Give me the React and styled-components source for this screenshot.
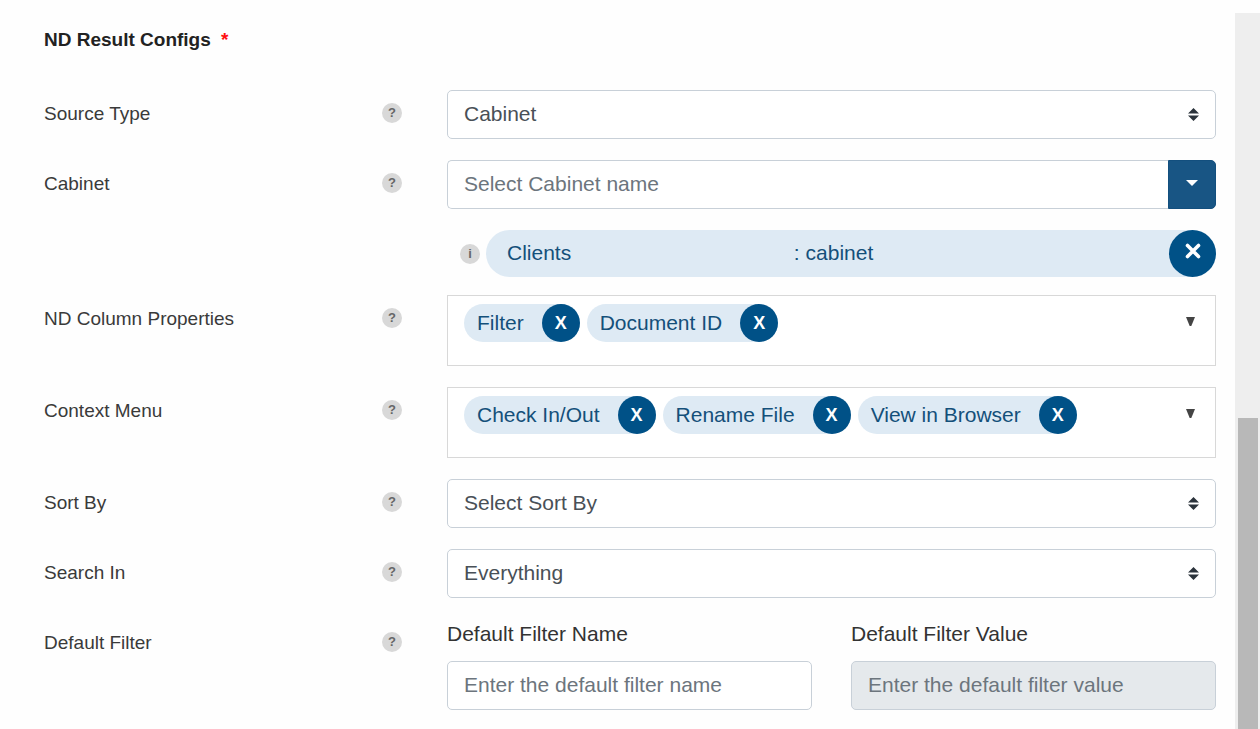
import React from "react";
import styled, { createGlobalStyle, css } from "styled-components";

const GlobalStyle = createGlobalStyle`
  *, *::before, *::after { box-sizing: border-box; }
  body {
    margin: 0;
    background: #fefefe;
    color: #333;
    font-family: "Liberation Sans", Arial, sans-serif;
  }
  button, input, select { font-family: inherit; margin: 0; }
`;

const Page = styled.div`
  display: flex;
  min-height: 100vh;
`;

const Form = styled.form`
  flex: 1;
  min-width: 0;
  padding: 28px 19px 0 44px;
`;

const Heading = styled.h2`
  margin: 0 0 38px;
  font-size: 19px;
  line-height: 24px;
  color: #222;
`;

const Required = styled.span`
  margin-left: 5px;
  color: #ff1010;
`;

const Row = styled.div`
  display: grid;
  grid-template-columns: 338px 20px minmax(0, 1fr);
  margin-bottom: ${(p) => (p.$tight ? 18 : 21)}px;
  &:last-child { margin-bottom: 0; }
`;

const labelText = css`
  font-size: 19px;
  line-height: 48px;
  color: #3a3a3a;
`;

const RowLabel = styled.label`
  ${labelText}
`;

const RowTitle = styled.span`
  ${labelText}
`;

const Control = styled.div`
  margin-left: 45px;
  min-width: 0;
`;

const Hint = styled.button`
  width: 20px;
  height: 20px;
  padding: 0;
  flex: none;
  border: 0;
  border-radius: 50%;
  background: #d8d8d8;
  color: #666;
  font-size: 13px;
  font-weight: 700;
  line-height: 20px;
  text-align: center;
`;

const HintCell = styled.div`
  display: flex;
  align-items: center;
  height: 46px;
`;

const field = css`
  display: block;
  width: 100%;
  height: 49px;
  padding: 0 16px 2px;
  border: 1px solid #c8d0d8;
  border-radius: 5px;
  background: #fff;
  font-size: 21px;
`;

const SelectWrap = styled.div`
  position: relative;
`;

const Select = styled.select`
  ${field}
  appearance: none;
  color: #495057;
`;

const SortArrows = styled.svg`
  position: absolute;
  top: 18px;
  right: 17px;
  pointer-events: none;
`;

const TextInput = styled.input`
  ${field}
  &::placeholder { color: #6c757d; opacity: 1; }
  &:disabled { background: #e5e9ec; }
`;

const Combo = styled.div`
  display: flex;
`;

const ComboInput = styled(TextInput)`
  flex: 1;
  min-width: 0;
  border-right: 0;
  border-radius: 5px 0 0 5px;
`;

const ComboButton = styled.button`
  display: flex;
  align-items: center;
  justify-content: center;
  width: 48px;
  padding: 0 0 4px;
  border: 1px solid #134f7e;
  border-radius: 0 5px 5px 0;
  background: #185584;
`;

const Selection = styled.div`
  display: flex;
  align-items: center;
  gap: 6px;
  margin-top: 21px;
  padding-left: 13px;
`;

const Pill = styled.div`
  display: grid;
  grid-template-columns: 13fr 17fr 47px;
  flex: 1;
  height: 47px;
  padding-left: 21px;
  border-radius: 24px;
  background: #deeaf4;
  color: #14507a;
  font-size: 21px;
  line-height: 45px;
`;

const PillRemove = styled.button`
  display: flex;
  align-items: center;
  justify-content: center;
  height: 47px;
  padding: 0 0 6px;
  border: 0;
  border-radius: 50%;
  background: #005187;
`;

const TagBox = styled.div`
  display: flex;
  align-items: flex-start;
  gap: 7px;
  min-height: 71px;
  padding: 8px 20px 8px 16px;
  border: 1px solid #d8d8d8;
  background: #fff;
`;

const Tag = styled.span`
  display: flex;
  gap: 18px;
  padding-left: 13px;
  border-radius: 20px;
  background: #deeaf4;
  color: #14507a;
  font-size: 21px;
  line-height: 37px;
  white-space: nowrap;
`;

const TagRemove = styled.button`
  width: 38px;
  height: 38px;
  padding: 0;
  border: 0;
  border-radius: 50%;
  background: #005187;
  color: #fff;
  font-size: 18px;
  font-weight: 700;
  line-height: 38px;
`;

const TagToggle = styled.button`
  display: flex;
  align-items: center;
  height: 34px;
  margin-left: auto;
  padding: 0;
  border: 0;
  background: none;
`;

const FilterFields = styled.div`
  display: grid;
  grid-template-columns: 1fr 1fr;
  gap: 39px;
`;

const FieldLabel = styled.label`
  display: block;
  margin-bottom: 12px;
  font-size: 21px;
  line-height: 30px;
  color: #333;
`;

const ScrollTrack = styled.div`
  display: flex;
  flex-direction: column;
  width: 25px;
  margin-top: 13px;
  padding: 0 2px 0 3px;
  background: #eee;
`;

const ScrollSpace = styled.div`
  flex: 405;
`;

const ScrollThumb = styled.div`
  flex: 311;
  background: #b8b8b8;
`;

function Help({ topic }) {
  return (
    <HintCell>
      <Hint type="button" aria-label={`Help: ${topic}`}>?</Hint>
    </HintCell>
  );
}

function SelectRow({ id, label, value }) {
  return (
    <Row>
      <RowLabel htmlFor={id}>{label}</RowLabel>
      <Help topic={label} />
      <Control>
        <SelectWrap>
          <Select id={id} defaultValue={value}>
            <option>{value}</option>
          </Select>
          <SortArrows width="11" height="13" viewBox="0 0 11 13" aria-hidden="true">
            <path d="M0 5.6 5.5 0 11 5.6zM0 7.4h11L5.5 13z" fill="#2b333b" />
          </SortArrows>
        </SelectWrap>
      </Control>
    </Row>
  );
}

function TagRow({ label, tags }) {
  return (
    <Row>
      <RowTitle>{label}</RowTitle>
      <Help topic={label} />
      <Control>
        <TagBox role="group" aria-label={label}>
          {tags.map((tag) => (
            <Tag key={tag}>
              {tag}
              <TagRemove type="button" aria-label={`Remove ${tag}`}>X</TagRemove>
            </Tag>
          ))}
          <TagToggle type="button" aria-label={`Open ${label}`}>
            <svg width="9" height="9" viewBox="0 0 9 9" aria-hidden="true">
              <path d="M0 0h9L5.3 9H3.7z" fill="#444" />
            </svg>
          </TagToggle>
        </TagBox>
      </Control>
    </Row>
  );
}

export default function App() {
  return (
    <>
      <GlobalStyle />
      <Page>
        <Form>
          <Heading>
            ND Result Configs <Required>*</Required>
          </Heading>
          <SelectRow id="source-type" label="Source Type" value="Cabinet" />
          <Row $tight>
            <RowLabel htmlFor="cabinet">Cabinet</RowLabel>
            <Help topic="Cabinet" />
            <Control>
              <Combo>
                <ComboInput id="cabinet" placeholder="Select Cabinet name" />
                <ComboButton type="button" aria-label="Show cabinets">
                  <svg width="12" height="6" viewBox="0 0 12 6" aria-hidden="true">
                    <path d="M0 0h12L6 6z" fill="#fff" />
                  </svg>
                </ComboButton>
              </Combo>
              <Selection>
                <Hint type="button" aria-label="Cabinet details">i</Hint>
                <Pill>
                  <span>Clients</span>
                  <span>: cabinet</span>
                  <PillRemove type="button" aria-label="Remove Clients">
                    <svg width="16" height="16" viewBox="0 0 16 16" aria-hidden="true">
                      <path
                        d="M2.5 2.5l11 11M13.5 2.5l-11 11"
                        stroke="#fff"
                        strokeWidth="3.6"
                        strokeLinecap="round"
                      />
                    </svg>
                  </PillRemove>
                </Pill>
              </Selection>
            </Control>
          </Row>
          <TagRow label="ND Column Properties" tags={["Filter", "Document ID"]} />
          <TagRow label="Context Menu" tags={["Check In/Out", "Rename File", "View in Browser"]} />
          <SelectRow id="sort-by" label="Sort By" value="Select Sort By" />
          <SelectRow id="search-in" label="Search In" value="Everything" />
          <Row>
            <RowTitle>Default Filter</RowTitle>
            <Help topic="Default Filter" />
            <Control>
              <FilterFields>
                <div>
                  <FieldLabel htmlFor="filter-name">Default Filter Name</FieldLabel>
                  <TextInput id="filter-name" placeholder="Enter the default filter name" />
                </div>
                <div>
                  <FieldLabel htmlFor="filter-value">Default Filter Value</FieldLabel>
                  <TextInput id="filter-value" placeholder="Enter the default filter value" disabled />
                </div>
              </FilterFields>
            </Control>
          </Row>
        </Form>
        <ScrollTrack aria-hidden="true">
          <ScrollSpace />
          <ScrollThumb />
        </ScrollTrack>
      </Page>
    </>
  );
}
